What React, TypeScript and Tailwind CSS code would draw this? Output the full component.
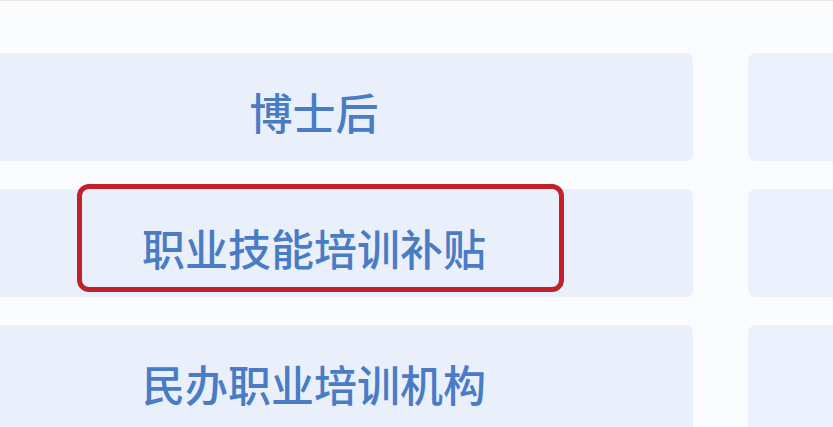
import React from "react";

const rows = ["博士后", "职业技能培训补贴", "民办职业培训机构"];

export default function App() {
  return (
    <div
      className="w-[833px] h-[427px] overflow-hidden bg-[#fbfcfe] border-t border-[#e6e6e6]"
      style={{ fontFamily: '"Noto Sans CJK SC", "Noto Sans", sans-serif' }}
    >
      <div className="flex flex-col gap-[28px] pt-[52px]">
        {rows.map((t, i) => (
          <div key={t} className="flex gap-[55px] ml-[-65px]">
            <div className="relative w-[758px] h-[108px] shrink-0 rounded-[7px] bg-[#e9f0fb] flex items-center justify-center pt-[9px]">
              <span className="text-[43px] leading-none font-medium text-[#4a7cc6]">{t}</span>
              {i === 1 && (
                <div className="absolute left-[142px] top-[-5px] w-[487px] h-[108px] rounded-[12px] border-[5px] border-[#c2212a]" />
              )}
            </div>
            <div className="w-[200px] h-[108px] shrink-0 rounded-[8px] bg-[#ebf1fc]" />
          </div>
        ))}
      </div>
    </div>
  );
}
